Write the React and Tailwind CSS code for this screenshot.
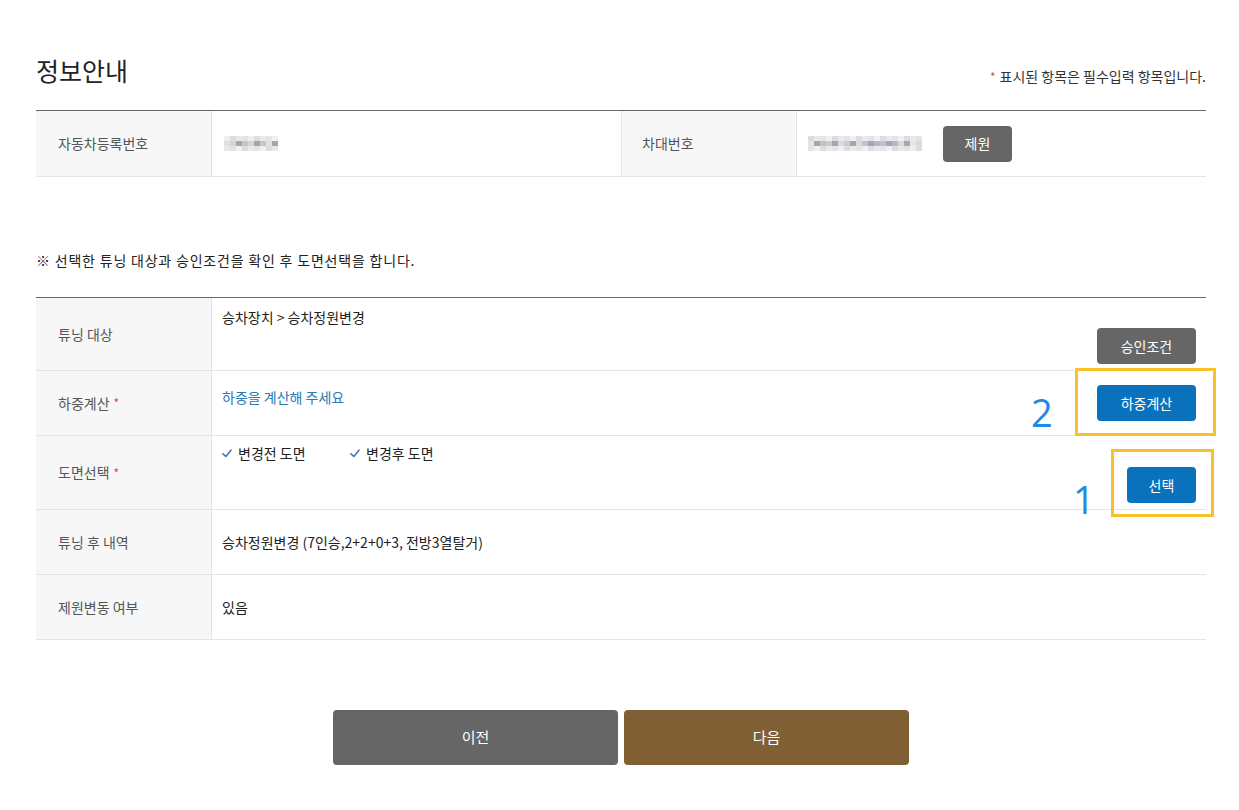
import React from "react";

const FONT = { fontFamily: '"Noto Sans CJK KR", "Noto Sans", sans-serif' };

function Blur({ cols, seed }) {
  const rows = [0, 1, 2];
  const palette = ["#d9d9de", "#c4c6c8", "#b8b6c2", "#cfcfd6", "#e6e8e8", "#a9adaa", "#c8cbd0", "#d8d3d4", "#bfc3c6", "#e0e0e4"];
  return (
    <div className="flex flex-col">
      {rows.map((r) => (
        <div key={r} className="flex">
          {Array.from({ length: cols }).map((_, c) => {
            const idx = (c * 7 + r * 3 + seed * 5 + ((c * c + r) % 4)) % palette.length;
            let col = palette[idx];
            if (r === 1 && (c + seed) % 3 === 0) col = "#a4a7ab";
            if (r !== 1) col = ["#e4e4e8", "#f0f0f3", "#dcdce2", "#e9e9ec"][(c + r + seed) % 4];
            return <div key={c} className="w-[6px] h-[5px]" style={{ background: col }} />;
          })}
        </div>
      ))}
    </div>
  );
}

function Check() {
  return (
    <svg width="10" height="9" viewBox="0 0 10 9" className="mr-[6px]">
      <path d="M1 4.8 L3.8 7.5 L9 1.2" fill="none" stroke="#3f76bd" strokeWidth="1.6" strokeLinecap="round" strokeLinejoin="round" />
    </svg>
  );
}

function Label({ children, req }) {
  return (
    <div className="w-[176px] shrink-0 bg-[#f7f7f7] border-r border-[#e5e5e5] flex items-center pl-[22px] text-[14px] text-[#555]">
      {children}
      {req && <span className="ml-[4px] text-[#e0474c] text-[12px]">*</span>}
    </div>
  );
}

export default function App() {
  return (
    <div className="bg-white min-h-[810px] w-[1239px]" style={FONT}>
      <div className="ml-[36px] w-[1170px]">
        {/* header */}
        <div className="h-[110px] flex justify-between">
          <h1 className="pt-[54px] text-[25px] leading-[32px] text-[#222] font-normal">정보안내</h1>
          <div className="pt-[66px] text-[14px] leading-[20px] text-[#333]">
            <span className="text-[#d9534f] mr-[4px] text-[12px]">*</span>표시된 항목은 필수입력 항목입니다.
          </div>
        </div>

        {/* top table */}
        <div className="border-t border-[#666]">
          <div className="flex h-[66px] border-b border-[#e5e5e5]">
            <Label>자동차등록번호</Label>
            <div className="w-[410px] border-r border-[#e5e5e5] flex items-center pl-[12px]">
              <Blur cols={9} seed={1} />
            </div>
            <div className="w-[175px] shrink-0 bg-[#f7f7f7] border-r border-[#e5e5e5] flex items-center pl-[20px] text-[14px] text-[#555]">
              차대번호
            </div>
            <div className="flex-1 flex items-center pl-[11px]">
              <Blur cols={19} seed={2} />
              <button className="ml-[21px] w-[69px] h-[36px] rounded-[4px] bg-[#666] text-white text-[14px]">제원</button>
            </div>
          </div>
        </div>

        <div className="mt-[73px] text-[14px] leading-[20px] tracking-[0.8px] text-[#222]">※ 선택한 튜닝 대상과 승인조건을 확인 후 도면선택을 합니다.</div>

        {/* second table */}
        <div className="relative mt-[27px] border-t border-[#666]">
          <div className="flex h-[73px] border-b border-[#e5e5e5]">
            <Label>튜닝 대상</Label>
            <div className="flex-1 flex flex-col pl-[10px] pr-[10px] pt-[9px]">
              <div className="text-[14px] leading-[20px] text-[#222]">승차장치 &gt; 승차정원변경</div>
              <button className="self-end mt-[1px] w-[99px] h-[36px] rounded-[4px] bg-[#666] text-white text-[14px]">승인조건</button>
            </div>
          </div>
          <div className="flex h-[65px] border-b border-[#e5e5e5]">
            <Label req>하중계산</Label>
            <div className="flex-1 flex justify-between items-start pl-[10px] pr-[10px] pt-[14px]">
              <div className="mt-[2px] text-[14px] leading-[20px] text-[#2a78b4]">하중을 계산해 주세요</div>
              <button className="w-[99px] h-[36px] rounded-[4px] bg-[#0a72bd] text-white text-[14px]">하중계산</button>
            </div>
          </div>
          <div className="flex h-[74px] border-b border-[#e5e5e5]">
            <Label req>도면선택</Label>
            <div className="flex-1 flex flex-col pl-[10px] pr-[10px] pt-[7px]">
              <div className="flex items-center text-[14px] leading-[20px] text-[#222]">
                <Check />
                <span className="w-[112px]">변경전 도면</span>
                <Check />
                <span>변경후 도면</span>
              </div>
              <button className="self-end mt-[4px] w-[69px] h-[36px] rounded-[4px] bg-[#0a72bd] text-white text-[14px]">선택</button>
            </div>
          </div>
          <div className="flex h-[65px] border-b border-[#e5e5e5]">
            <Label>튜닝 후 내역</Label>
            <div className="flex-1 flex items-center pl-[10px] text-[14px] text-[#222]">승차정원변경 (7인승,2+2+0+3, 전방3열탈거)</div>
          </div>
          <div className="flex h-[65px] border-b border-[#e5e5e5]">
            <Label>제원변동 여부</Label>
            <div className="flex-1 flex items-center pl-[10px] text-[14px] text-[#222]">있음</div>
          </div>

          {/* annotations */}
          <div className="absolute left-[1039px] top-[70px] w-[141px] h-[68px] border-[3px] border-[#f9c22a]" />
          <div className="absolute left-[1075px] top-[151px] w-[103px] h-[68px] border-[3px] border-[#f9c22a]" />
          <div className="absolute left-[995px] top-[92px] text-[38px] leading-[44px] text-[#1e8ae6] font-normal" style={{ fontFamily: '"Open Sans", sans-serif' }}>2</div>
          <div className="absolute left-[1037px] top-[179px] text-[38px] leading-[44px] text-[#1e8ae6] font-normal" style={{ fontFamily: '"Open Sans", sans-serif' }}>1</div>
        </div>

        {/* bottom buttons */}
        <div className="mt-[70px] flex gap-[6px] ml-[297px]">
          <button className="w-[285px] h-[55px] rounded-[4px] bg-[#666] text-white text-[15px]">이전</button>
          <button className="w-[285px] h-[55px] rounded-[4px] bg-[#7f5f33] text-white text-[15px]">다음</button>
        </div>
      </div>
    </div>
  );
}
